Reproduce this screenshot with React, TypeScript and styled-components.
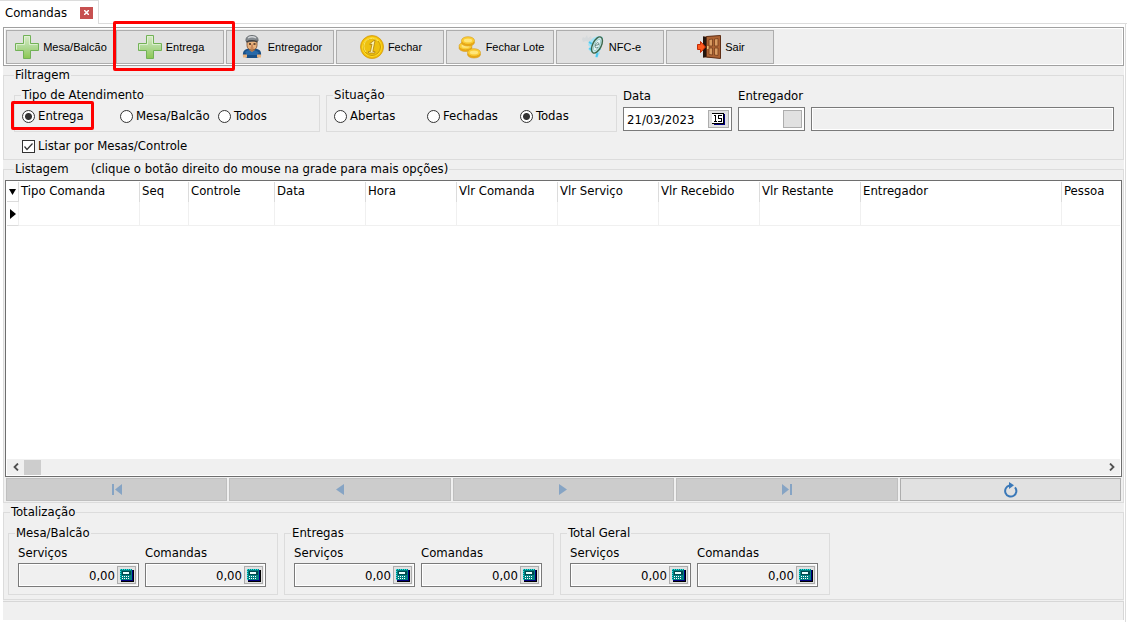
import React from "react";
import styled, { createGlobalStyle, css } from "styled-components";

const GlobalStyle = createGlobalStyle`
  * { box-sizing: border-box; }
  body {
    margin: 0;
    background: #fff;
    color: #000;
    font: 13px/16px "DejaVu Sans Condensed", "Noto Sans", sans-serif;
  }
  button, input { font: inherit; color: inherit; }
`;

const Window = styled.div`
  display: flex;
  flex-direction: column;
  min-height: 100vh;
`;

const TabBar = styled.div`
  display: flex;
  height: 24px;
  flex: none;
`;

const Tab = styled.div`
  display: flex;
  align-items: center;
  justify-content: space-between;
  padding: 0 5px;
  border-top: 1px solid #dcdcdc;
  border-right: 1px solid #dcdcdc;
  width: 99px;
`;

const TabFiller = styled.div`
  flex: 1;
  border-bottom: 1px solid #dcdcdc;
`;

const CloseButton = styled.button`
  display: flex;
  align-items: center;
  justify-content: center;
  width: 13px;
  height: 12px;
  padding: 0;
  border: 0;
  background: #c75050;
`;

const Page = styled.main`
  flex: 1;
  display: flex;
  flex-direction: column;
  gap: 1px;
  margin-right: 1px;
  padding: 3px 1px 2px 3px;
  border-right: 1px solid #dcdcdc;
  background: linear-gradient(#f0f0f0, #f0f0f0) content-box, #fff;
`;

const Toolbar = styled.div`
  display: flex;
  gap: 2px;
  padding: 2px 2px 1px;
  border: 1px solid #a0a0a0;
  box-shadow: inset 0 0 0 1px #fff;
`;

const highlight = css`
  position: relative;
  &::after {
    content: "";
    position: absolute;
    border: 3px solid #f00;
    border-radius: 2px;
    z-index: 1;
    pointer-events: none;
  }
`;

const ToolButton = styled.button<{ $highlighted?: boolean }>`
  display: flex;
  align-items: center;
  justify-content: center;
  gap: 4px;
  width: 108px;
  height: 34px;
  padding: 0 0 0 2px;
  border: 1px solid #adadad;
  background: #e1e1e1;
  font: 11px/16px "Liberation Sans", Arial, sans-serif;
  white-space: nowrap;
  ${(p) =>
    p.$highlighted &&
    css`
      ${highlight}
      &::after { inset: -10px -12px -8px -4px; }
    `}
`;

const Group = styled.fieldset`
  margin: 0;
  padding: 0;
  min-width: 0;
  border: 1px solid #dcdcdc;
`;

const Legend = styled.legend<{ $indent: number }>`
  display: flex;
  gap: 22px;
  margin-left: ${(p) => p.$indent}px;
  padding: 0 1px;
  line-height: 16px;
  white-space: nowrap;
`;

const FilterBody = styled.div`
  display: flex;
  flex-direction: column;
  gap: 6px;
  padding: 4px 9px 5px 10px;
`;

const FilterRow = styled.div`
  display: flex;
  gap: 6px;
`;

const Options = styled.div<{ $column: number; $end: number }>`
  display: grid;
  grid-template-columns: repeat(3, ${(p) => p.$column}px);
  padding: 5px ${(p) => p.$end}px 7px 7px;
`;

const Choice = styled.label<{ $highlighted?: boolean }>`
  display: flex;
  align-items: center;
  gap: 3px;
  justify-self: start;
  white-space: nowrap;
  ${(p) =>
    p.$highlighted &&
    css`
      ${highlight}
      &::after { inset: -7px -10px -6px -11px; }
    `}
`;

const Radio = styled.input.attrs({ type: "radio" })`
  appearance: none;
  width: 13px;
  height: 13px;
  margin: 0;
  border: 1px solid #333;
  border-radius: 50%;
  background: #fff;
  &:checked {
    background: radial-gradient(circle, #333 3px, #fff 4px);
  }
`;

const CheckRow = styled.div`
  display: flex;
  padding-left: 8px;
`;

const CheckBoxFrame = styled.span`
  display: grid;
  width: 13px;
  height: 13px;
  > * { grid-area: 1 / 1; }
  svg { pointer-events: none; opacity: 0; }
  input:checked + svg { opacity: 1; }
`;

const CheckBox = styled.input.attrs({ type: "checkbox" })`
  appearance: none;
  width: 13px;
  height: 13px;
  margin: 0;
  border: 1px solid #333;
  background: #fff;
`;

const FieldColumn = styled.div<{ $width?: number; $top: number; $gap: number }>`
  display: flex;
  flex-direction: column;
  gap: ${(p) => p.$gap}px;
  padding-top: ${(p) => p.$top}px;
  ${(p) => (p.$width ? `width: ${p.$width}px;` : "flex: 1; justify-content: flex-end; padding-bottom: 1px;")}
`;

const Field = styled.div<{ $readOnly?: boolean }>`
  display: flex;
  align-items: center;
  height: 24px;
  padding-right: 2px;
  border: 1px solid #7a7a7a;
  background: ${(p) => (p.$readOnly ? "#f0f0f0" : "#fff")};
  ${(p) => p.$readOnly && "box-shadow: inset 0 0 0 1px #fff;"}
`;

const FieldInput = styled.input<{ $right?: boolean }>`
  flex: 1;
  min-width: 0;
  height: 18px;
  padding: 0 2px 0 3px;
  border: 0;
  outline: 0;
  background: transparent;
  text-align: ${(p) => (p.$right ? "right" : "left")};
`;

const FieldButton = styled.button<{ $wide?: boolean }>`
  display: flex;
  align-items: center;
  justify-content: center;
  width: ${(p) => (p.$wide ? 21 : 19)}px;
  height: 18px;
  padding: 0;
  border: 1px solid #adadad;
  background: #e1e1e1;
`;

const ListBody = styled.div`
  display: flex;
  flex-direction: column;
  gap: 1px;
  padding: 3px 1px 1px;
`;

/* Takes the window height that the bars above and below leave free. */
const GridFrame = styled.div`
  display: flex;
  flex-direction: column;
  justify-content: space-between;
  min-height: calc(100vh - 325px);
  padding: 1px;
  border: 1px solid #6e6e6e;
  background: #fff;
  overflow: hidden;
`;

const DataTable = styled.table`
  width: 100%;
  table-layout: fixed;
  border-collapse: separate;
  border-spacing: 0;
  th, td {
    height: 20px;
    padding: 0 2px 2px;
    border-right: 1px solid #dcdcdc;
    font-weight: normal;
    text-align: left;
    white-space: nowrap;
  }
  td {
    height: 24px;
    border-right-color: #f0f0f0;
    border-bottom: 1px solid #f0f0f0;
  }
  th:first-child, td:first-child {
    padding: 0 0 0 2px;
    border-bottom: 1px solid #dcdcdc;
  }
  th:last-child, td:last-child { border-right: 0; }
  svg { display: block; }
`;

const ScrollBar = styled.div`
  display: flex;
  align-items: center;
  height: 16px;
  background: #f0f0f0;
`;

const ScrollArrow = styled.button`
  display: flex;
  align-items: center;
  justify-content: center;
  width: 17px;
  height: 16px;
  padding: 0;
  border: 0;
  background: transparent;
`;

const ScrollTrack = styled.div`
  flex: 1;
`;

const ScrollThumb = styled.div`
  width: 17px;
  height: 15px;
  background: #cdcdcd;
`;

const Navigator = styled.div`
  display: grid;
  grid-template-columns: repeat(5, 1fr);
  gap: 2px;
  padding: 0 1px;
`;

const NavButton = styled.button`
  display: flex;
  align-items: center;
  justify-content: center;
  height: 23px;
  padding: 0;
  border: 1px solid #adadad;
  background: #e1e1e1;
  &:disabled {
    border-color: #bfbfbf;
    background: #ccc;
  }
`;

const TotalsBody = styled.div`
  display: flex;
  gap: 6px;
  padding: 5px 4px 4px;
`;

const TotalFields = styled.div`
  display: flex;
  gap: 6px;
  padding: 4px 11px 7px 9px;
`;

const StatusBar = styled.footer`
  height: 19px;
  border-top: 1px solid #d7d7d7;
  border-right: 1px solid #d7d7d7;
`;

const PlusIcon = () => (
  <svg width="24" height="24" viewBox="0 0 24 24" aria-hidden="true">
    <defs>
      <linearGradient id="plusFill" x1="0" y1="0" x2="0" y2="1">
        <stop offset="0" stopColor="#d9ecc9" />
        <stop offset="0.5" stopColor="#b0d996" />
        <stop offset="1" stopColor="#8cc751" />
      </linearGradient>
    </defs>
    <path d="M8.5.5h7v8h8v7h-8v8h-7v-8h-8v-7h8z" fill="url(#plusFill)" stroke="#72b257" />
    <path d="M9.5 9.5v-8h5v8h8M1.500 14.500v-5h8" fill="none" stroke="#e4f3da" strokeOpacity=".8" />
  </svg>
);

const CourierIcon = () => (
  <svg width="24" height="24" viewBox="-2 0 24 24" aria-hidden="true">
    <path d="M1 21c-.4-5 1-6.500 6-7.500h6c5 1 6.500 2.500 6 7.500l-4 2H5z" fill="#194f86" />
    <path d="M3 17c2-2 4-2 6-1.500l5 .2 3 1.800-2 2.500H5z" fill="#2869a8" />
    <path d="M1 19.500h4v3H1zM15 19.500h4v3h-4z" fill="#eab27c" />
    <path d="M7 12h6v3l-3 2-3-2z" fill="#c98550" />
    <path d="M5 6h10v4.500c0 2.800-2.200 4.500-5 4.500s-5-1.700-5-4.500z" fill="#e9b27d" stroke="#77492c" strokeWidth=".8" />
    <path d="M4 6C3.500 2.500 6 .5 10 .5s6.500 2 6 5.500l-2-.8-9 2z" fill="#858b90" stroke="#5d6266" strokeWidth=".8" />
    <path d="M6 3c2.500-1.600 5.500-1.600 8 0" stroke="#d3d6d8" strokeWidth="1.400" fill="none" />
    <path d="M4.500 7c3-1.800 8-1.800 11 0" stroke="#3f3f40" strokeWidth="1.200" fill="none" />
    <path d="M7 9h2M11.500 9h2" stroke="#402719" strokeWidth="1.300" />
    <path d="M10 9.500v2.500M8.500 13h3" stroke="#a95c36" fill="none" />
  </svg>
);

const CoinIcon = () => (
  <svg width="24" height="24" viewBox="0 0 24 24" aria-hidden="true">
    <circle cx="12" cy="12" r="11.500" fill="#f3be08" stroke="#d19a12" strokeWidth=".8" />
    <circle cx="12" cy="12" r="10" fill="#ffdc24" />
    <circle cx="12" cy="12" r="8.500" fill="#eec10e" stroke="#c99a0a" />
    <path d="M6 17A8 8 0 0 1 18 6" fill="none" stroke="#ffe75c" />
    <path d="M10 8.500l4-3h1l-2.200 11h2v1.500H8.500v-1.500h2l1.500-7.500-2 .8z" fill="#fff6b4" stroke="#a47309" strokeWidth=".7" />
  </svg>
);

const CoinsIcon = () => (
  <svg width="24" height="24" viewBox="-1 -1 24 24" aria-hidden="true">
    <g stroke="#d59a18" strokeWidth=".6">
      {[
        [6.500, 10],
        [9, 4.500],
        [15, 16.500],
      ].map(([x, y]) => (
        <g key={y}>
          <ellipse cx={x} cy={y + 2} rx="6.500" ry="3.500" fill="#eeaa14" />
          <ellipse cx={x} cy={y} rx="6.500" ry="3.800" fill="#fdcf32" />
          <ellipse cx={x} cy={y} rx="4.500" ry="2.300" fill="#ffe67a" stroke="#f5c22c" />
        </g>
      ))}
    </g>
  </svg>
);

const NfceIcon = () => (
  <svg width="24" height="24" viewBox="0 0 24 24" aria-hidden="true">
    <path d="M1 4l1-2 2 1 2-3 1 3 3-2 1 4-3 2-3-1-3 1z" fill="#d6dadc" />
    <path d="M8 7l4-4 5-2 5 1-1 9-3 4 1 3-3 5-2-1 1-4-5-1-3-3 2-2-2-2z" fill="#a4e4f7" />
    <path d="M8 7l3 2M16.500 18l-1 4M8.500 13l3 3M18 13l1 2" stroke="#4cc9ee" strokeWidth="2" />
    <ellipse cx="16" cy="10" rx="4.300" ry="8.800" transform="rotate(26 16 10)" fill="#c6eaf0" stroke="#3d6648" strokeWidth="1.400" />
    <ellipse cx="16" cy="10" rx="2.600" ry="6.200" transform="rotate(26 16 10)" fill="#e3f3f3" stroke="#8cc3bb" strokeWidth=".7" />
    <path d="M14 10.500l4-1c0-2.500-2.500-2.500-3.500.2s0 3.800 2.500 2.800" stroke="#6b8c85" fill="none" />
  </svg>
);

const DoorIcon = () => (
  <svg width="24" height="24" viewBox="0 0 24 24" aria-hidden="true">
    <path d="M6 1.500h17v21H6z" fill="#603016" />
    <path d="M6 1.500l4 1v19l-4 1z" fill="#23150e" />
    <path d="M9.500 1.500l14-1v23l-14-1.500z" fill="#ad6333" stroke="#5f2f16" />
    <path d="M12 4.500l3.500-.5v7H12zM17.500 4l3.500-.5V11h-3.500zM12 13h3.500v7l-3.500-.5zM17.500 13H21v7.500l-3.500-.5z" fill="#d99b61" stroke="#753d1c" strokeWidth=".8" />
    <path d="M10.800 11v3" stroke="#ffd68b" strokeWidth="1.200" />
    <path d="M.5 9.500h3v-3L8.500 12l-5 5.500v-3h-3z" fill="#ff5a1c" stroke="#c42b08" />
  </svg>
);

const CalendarIcon = () => (
  <svg width="13" height="12" viewBox="0 0 13 12" shapeRendering="crispEdges" aria-hidden="true">
    <path d="M2 1h11v11H2z" fill="#000080" />
    <path d="M0 0h12v11H0z" fill="#000" />
    <path d="M0 1h11v9H0z" fill="#fff" />
    <path d="M2 2h2v6h1v1H2V8h1V3H2zM6 2h4v1H7v2h3v4H6V8h3V6H6z" fill="#000" />
  </svg>
);

const CalculatorIcon = () => (
  <svg width="14" height="13" viewBox="0 0 14 13" shapeRendering="crispEdges" aria-hidden="true">
    <path d="M1 1h13v12H1z" fill="#000" />
    <path d="M1 1h12v11H1z" fill="#000080" />
    <path d="M0 0h12v11H0z" fill="#008080" />
    <path d="M0 .5h12M.5 0v11" stroke="#2ce5e5" strokeDasharray="1 1" />
    <path d="M2 2h9v4H2z" fill="#00494d" />
    <path d="M3 3h6v2H3z" fill="#e8ffff" />
    <path d="M2 7.500h8M2 9.500h8" stroke="#fff" strokeDasharray="1 1" />
  </svg>
);

const NavIcon = ({ kind }: { kind: "first" | "prev" | "next" | "last" }) => {
  const shapes = {
    first: "M0 0h2v11H0zM10 0v11L3 5.500z",
    prev: "M9 0v11L1 5.500z",
    next: "M1 0v11l8-5.500z",
    last: "M0 0v11l7-5.500zM8 0h2v11H8z",
  };
  return (
    <svg width="10" height="11" viewBox="0 0 10 11" aria-hidden="true">
      <path d={shapes[kind]} fill="#86a4c4" />
    </svg>
  );
};

const RefreshIcon = () => (
  <svg width="15" height="16" viewBox="0 0 15 16" aria-hidden="true">
    <path d="M6.500 3.500a5.600 5.600 0 1 0 5.500 1.800" fill="none" stroke="#3a78b8" strokeWidth="2" />
    <path d="M6 0l5 3.200L6 7z" fill="#3a78b8" />
  </svg>
);

const columns: [string, number?][] = [
  ["Tipo Comanda", 121],
  ["Seq", 49],
  ["Controle", 86],
  ["Data", 91],
  ["Hora", 91],
  ["Vlr Comanda", 101],
  ["Vlr Serviço", 101],
  ["Vlr Recebido", 101],
  ["Vlr Restante", 101],
  ["Entregador", 201],
  ["Pessoa"],
];

const tools = [
  { label: "Mesa/Balcão", Icon: PlusIcon },
  { label: "Entrega", Icon: PlusIcon, highlighted: true },
  { label: "Entregador", Icon: CourierIcon },
  { label: "Fechar", Icon: CoinIcon },
  { label: "Fechar Lote", Icon: CoinsIcon },
  { label: "NFC-e", Icon: NfceIcon },
  { label: "Sair", Icon: DoorIcon },
];

const totals = ["Mesa/Balcão", "Entregas", "Total Geral"];

const AmountField = ({ id, label }: { id: string; label: string }) => (
  <FieldColumn $width={121} $top={0} $gap={2}>
    <label htmlFor={id}>{label}</label>
    <Field $readOnly>
      <FieldInput id={id} $right readOnly value="0,00" />
      <FieldButton type="button" aria-label="Calculadora">
        <CalculatorIcon />
      </FieldButton>
    </Field>
  </FieldColumn>
);

export default function App() {
  return (
    <>
      <GlobalStyle />
      <Window>
        <TabBar>
          <Tab>
            Comandas
            <CloseButton type="button" aria-label="Fechar aba">
              <svg width="5" height="5" viewBox="0 0 5 5" aria-hidden="true">
                <path d="M0 0l5 5M5 0L0 5" stroke="#fff" strokeWidth="1.500" />
              </svg>
            </CloseButton>
          </Tab>
          <TabFiller />
        </TabBar>
        <Page>
          <Toolbar role="toolbar">
            {tools.map(({ label, Icon, highlighted }) => (
              <ToolButton key={label} type="button" $highlighted={highlighted}>
                <Icon />
                {label}
              </ToolButton>
            ))}
          </Toolbar>

          <Group>
            <Legend $indent={10}>Filtragem</Legend>
            <FilterBody>
              <FilterRow>
                <Group>
                  <Legend $indent={6}>Tipo de Atendimento</Legend>
                  <Options $column={98} $end={3}>
                    <Choice $highlighted>
                      <Radio name="tipo" defaultChecked />
                      Entrega
                    </Choice>
                    <Choice>
                      <Radio name="tipo" />
                      Mesa/Balcão
                    </Choice>
                    <Choice>
                      <Radio name="tipo" />
                      Todos
                    </Choice>
                  </Options>
                </Group>
                <Group>
                  <Legend $indent={6}>Situação</Legend>
                  <Options $column={93} $end={3}>
                    <Choice>
                      <Radio name="situacao" />
                      Abertas
                    </Choice>
                    <Choice>
                      <Radio name="situacao" />
                      Fechadas
                    </Choice>
                    <Choice>
                      <Radio name="situacao" defaultChecked />
                      Todas
                    </Choice>
                  </Options>
                </Group>
                <FieldColumn $width={109} $top={1} $gap={3}>
                  <label htmlFor="data">Data</label>
                  <Field>
                    <FieldInput id="data" defaultValue="21/03/2023" />
                    <FieldButton type="button" $wide aria-label="Calendário">
                      <CalendarIcon />
                    </FieldButton>
                  </Field>
                </FieldColumn>
                <FieldColumn $width={67} $top={1} $gap={3}>
                  <label htmlFor="entregador">Entregador</label>
                  <Field>
                    <FieldInput id="entregador" />
                    <FieldButton type="button" aria-label="Buscar entregador" />
                  </Field>
                </FieldColumn>
                <FieldColumn $top={0} $gap={0}>
                  <Field $readOnly>
                    <FieldInput aria-label="Nome do entregador" readOnly />
                  </Field>
                </FieldColumn>
              </FilterRow>
              <CheckRow>
                <Choice>
                  <CheckBoxFrame>
                    <CheckBox defaultChecked />
                    <svg width="13" height="13" viewBox="0 0 13 13" aria-hidden="true">
                      <path d="M2.500 6.500l2.500 3 5.500-6" fill="none" stroke="#333" strokeWidth="1.200" />
                    </svg>
                  </CheckBoxFrame>
                  Listar por Mesas/Controle
                </Choice>
              </CheckRow>
            </FilterBody>
          </Group>

          <Group>
            <Legend $indent={10}>
              <span>Listagem</span>
              <span>(clique o botão direito do mouse na grade para mais opções)</span>
            </Legend>
            <ListBody>
              <GridFrame>
                <DataTable>
                  <colgroup>
                    <col style={{ width: 12 }} />
                    {columns.map(([name, width]) => (
                      <col key={name} style={{ width }} />
                    ))}
                  </colgroup>
                  <thead>
                    <tr>
                      <th aria-label="Indicador">
                        <svg width="8" height="6" viewBox="0 0 8 6" aria-hidden="true">
                          <path d="M0 0h7L3.500 6z" fill="#000" />
                        </svg>
                      </th>
                      {columns.map(([name]) => (
                        <th key={name}>{name}</th>
                      ))}
                    </tr>
                  </thead>
                  <tbody>
                    <tr>
                      <td>
                        <svg width="8" height="10" viewBox="0 0 8 10" aria-hidden="true">
                          <path d="M1 0v10l6-5z" fill="#000" />
                        </svg>
                      </td>
                      {columns.map(([name]) => (
                        <td key={name} />
                      ))}
                    </tr>
                  </tbody>
                </DataTable>
                <ScrollBar>
                  <ScrollArrow type="button" aria-label="Rolar para a esquerda">
                    <svg width="6" height="8" viewBox="0 0 6 8" aria-hidden="true">
                      <path d="M5 .5L1.500 4 5 7.500" fill="none" stroke="#505050" strokeWidth="1.800" />
                    </svg>
                  </ScrollArrow>
                  <ScrollTrack>
                    <ScrollThumb />
                  </ScrollTrack>
                  <ScrollArrow type="button" aria-label="Rolar para a direita">
                    <svg width="6" height="8" viewBox="0 0 6 8" aria-hidden="true">
                      <path d="M1 .5L4.500 4 1 7.500" fill="none" stroke="#505050" strokeWidth="1.800" />
                    </svg>
                  </ScrollArrow>
                </ScrollBar>
              </GridFrame>
              <Navigator>
                <NavButton type="button" disabled aria-label="Primeiro"><NavIcon kind="first" /></NavButton>
                <NavButton type="button" disabled aria-label="Anterior"><NavIcon kind="prev" /></NavButton>
                <NavButton type="button" disabled aria-label="Próximo"><NavIcon kind="next" /></NavButton>
                <NavButton type="button" disabled aria-label="Último"><NavIcon kind="last" /></NavButton>
                <NavButton type="button" aria-label="Atualizar"><RefreshIcon /></NavButton>
              </Navigator>
            </ListBody>
          </Group>

          <Group>
            <Legend $indent={6}>Totalização</Legend>
            <TotalsBody>
              {totals.map((name, i) => (
                <Group key={name}>
                  <Legend $indent={6}>{name}</Legend>
                  <TotalFields>
                    <AmountField id={`servicos-${i}`} label="Serviços" />
                    <AmountField id={`comandas-${i}`} label="Comandas" />
                  </TotalFields>
                </Group>
              ))}
            </TotalsBody>
          </Group>

          <StatusBar />
        </Page>
      </Window>
    </>
  );
}
